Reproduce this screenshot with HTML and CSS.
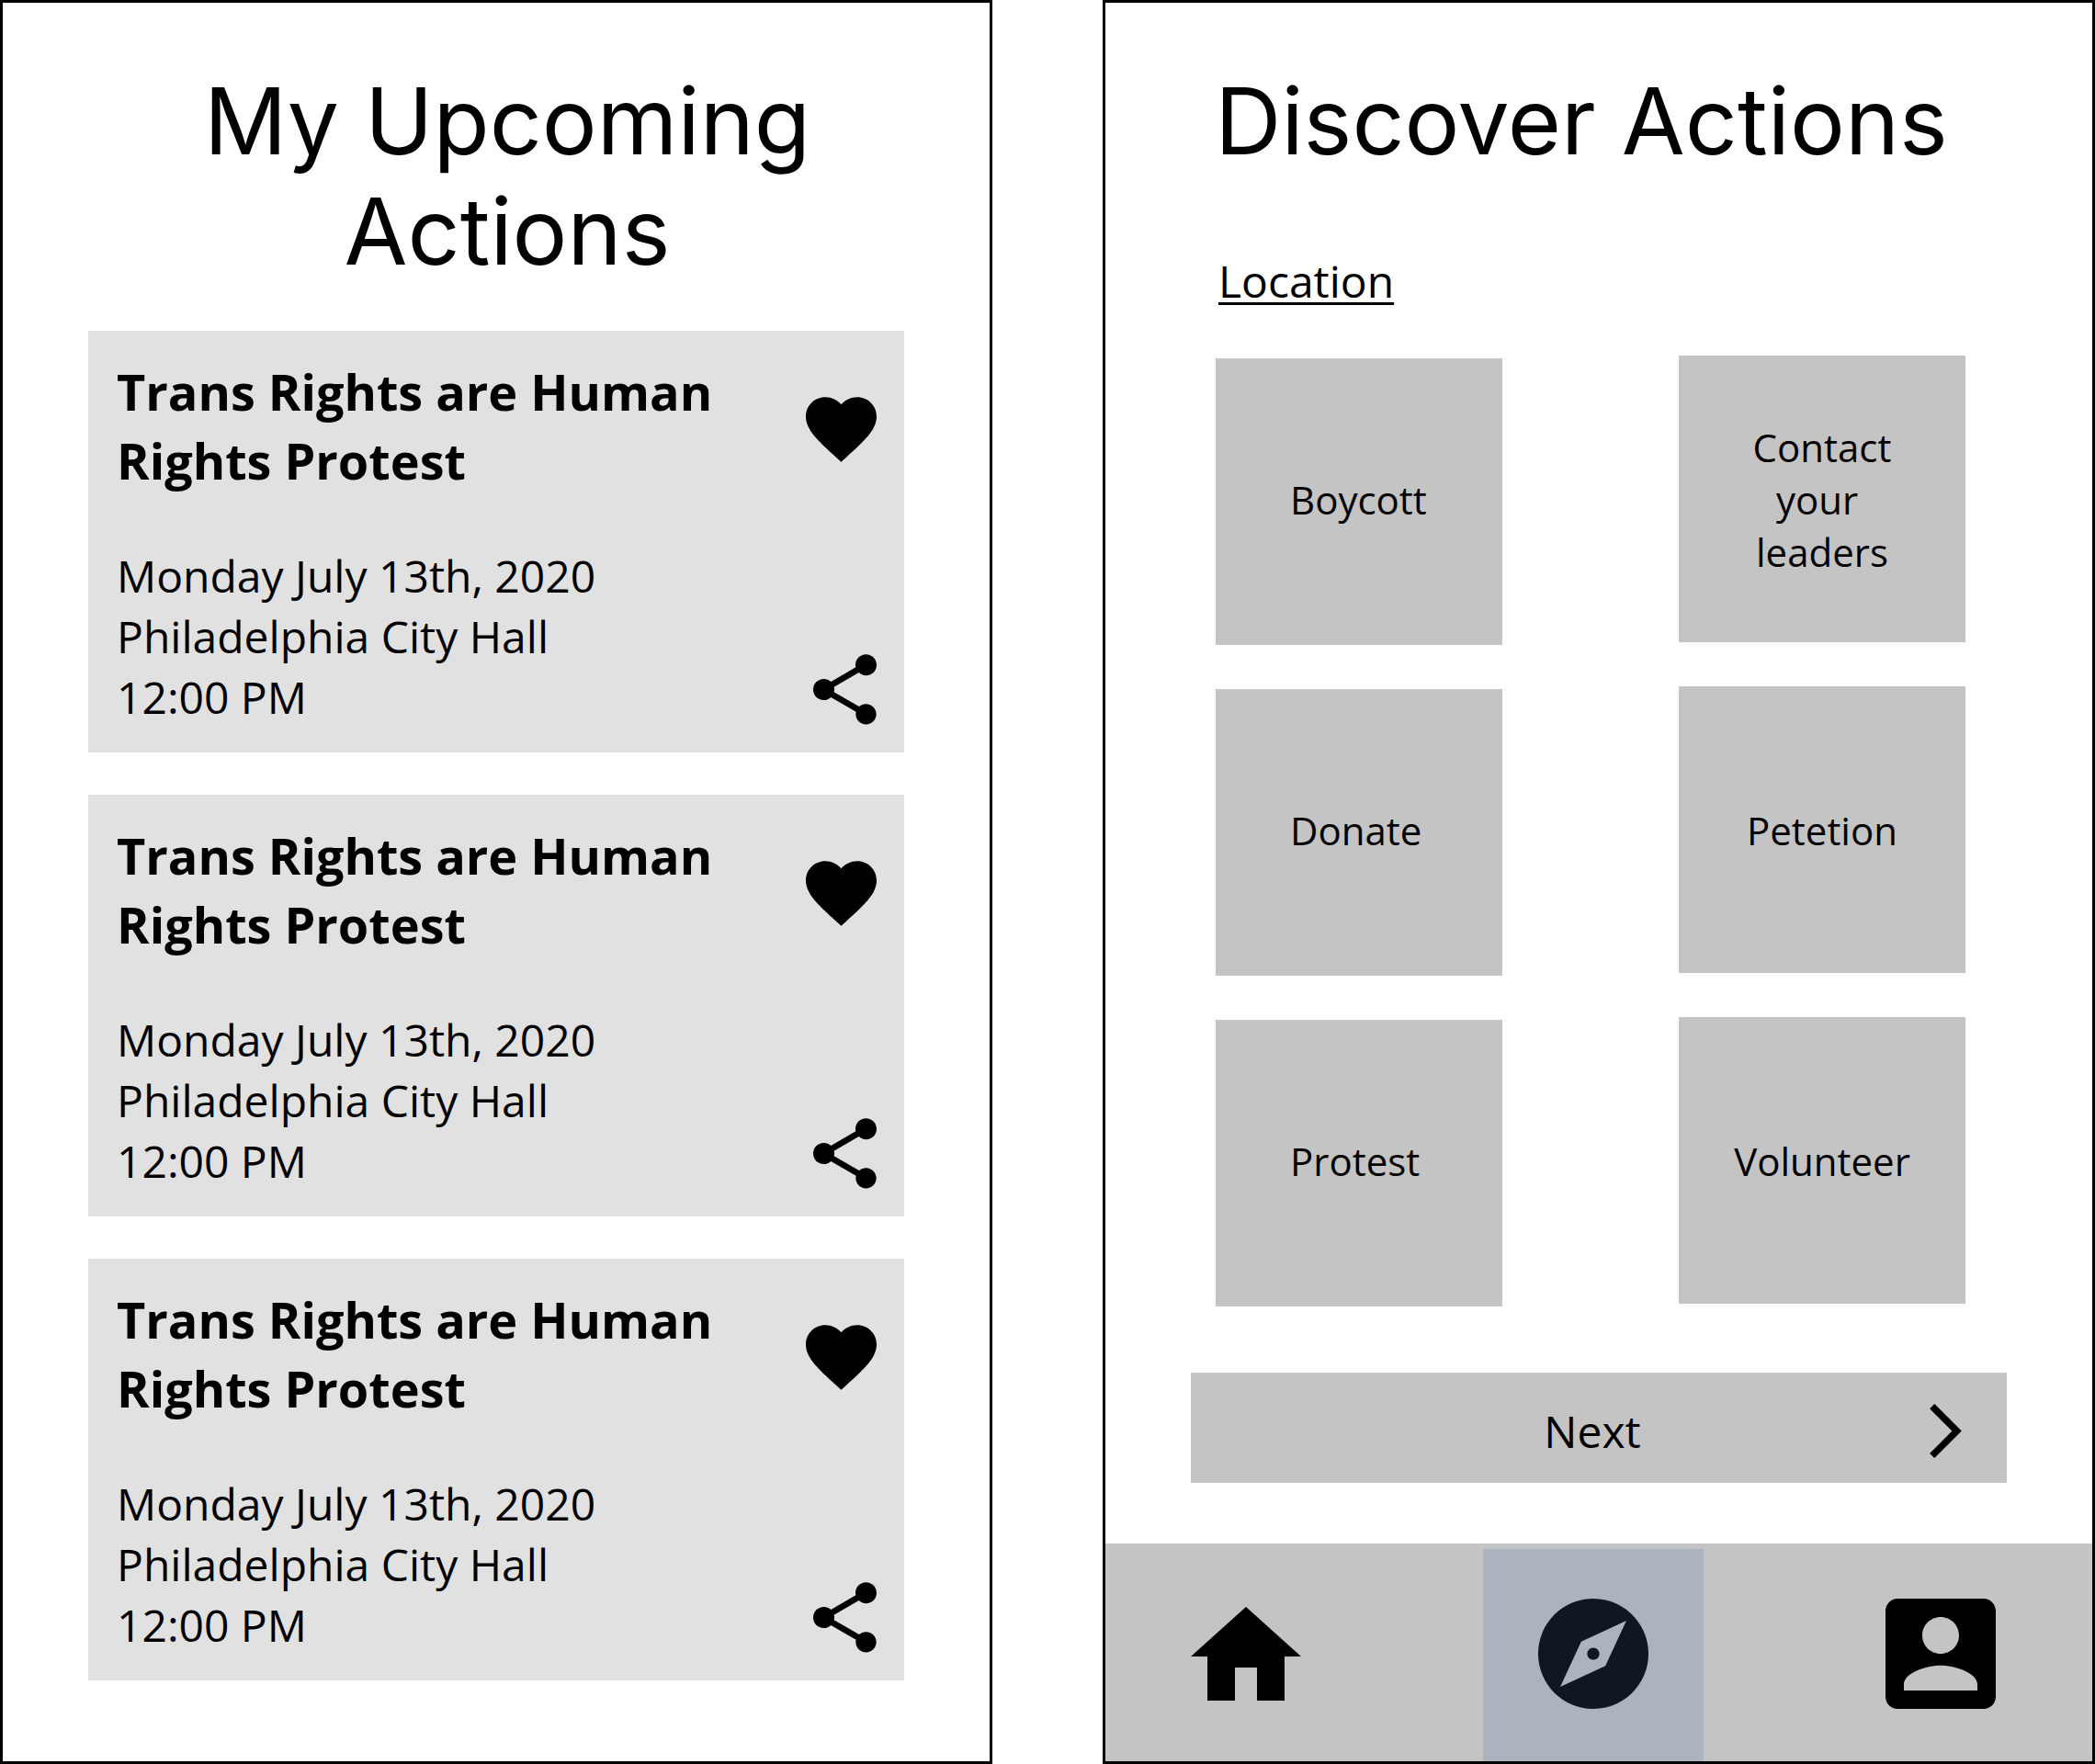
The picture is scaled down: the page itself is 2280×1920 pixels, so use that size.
FILE: index.html
```html
<!DOCTYPE html>
<html lang="en">
<head>
<meta charset="utf-8">
<meta name="viewport" content="width=device-width, initial-scale=1">
<title>Actions</title>
<link rel="stylesheet" href="styles.css">
</head>
<body>
<svg class="sprite" aria-hidden="true">
  <symbol id="heart" viewBox="2 3 20 18.35"><path d="M12 21.35l-1.45-1.32C5.4 15.36 2 12.28 2 8.5 2 5.42 4.42 3 7.5 3c1.74 0 3.41.81 4.5 2.09C13.09 3.81 14.76 3 16.5 3 19.58 3 22 5.42 22 8.5c0 3.78-3.4 6.86-8.55 11.54L12 21.35z"/></symbol>
  <symbol id="share" viewBox="3 2 18 20"><path d="M18 16.08c-.76 0-1.44.3-1.96.77L8.91 12.7c.05-.23.09-.46.09-.7s-.04-.47-.09-.7l7.05-4.11c.54.5 1.25.81 2.04.81 1.66 0 3-1.34 3-3s-1.34-3-3-3-3 1.34-3 3c0 .24.04.47.09.7L8.04 9.81C7.5 9.31 6.79 9 6 9c-1.66 0-3 1.34-3 3s1.34 3 3 3c.79 0 1.5-.31 2.04-.81l7.12 4.16c-.05.21-.08.43-.08.65 0 1.61 1.31 2.92 2.92 2.92s2.92-1.31 2.92-2.92-1.31-2.92-2.92-2.92z"/></symbol>
</svg>
<div class="screens">
  <main class="screen upcoming">
    <h1 class="heading">My Upcoming Actions</h1>
    <div class="cards">
      <article class="card">
        <div class="card-text">
          <h2 class="card-title">Trans Rights are Human Rights Protest</h2>
          <p class="card-info">Monday July 13th, 2020<br>Philadelphia City Hall<br>12:00 PM</p>
        </div>
        <div class="card-tools">
          <button class="icon-button" type="button" aria-label="Like"><svg class="heart"><use href="#heart"/></svg></button>
          <button class="icon-button" type="button" aria-label="Share"><svg class="share"><use href="#share"/></svg></button>
        </div>
      </article>
      <article class="card">
        <div class="card-text">
          <h2 class="card-title">Trans Rights are Human Rights Protest</h2>
          <p class="card-info">Monday July 13th, 2020<br>Philadelphia City Hall<br>12:00 PM</p>
        </div>
        <div class="card-tools">
          <button class="icon-button" type="button" aria-label="Like"><svg class="heart"><use href="#heart"/></svg></button>
          <button class="icon-button" type="button" aria-label="Share"><svg class="share"><use href="#share"/></svg></button>
        </div>
      </article>
      <article class="card">
        <div class="card-text">
          <h2 class="card-title">Trans Rights are Human Rights Protest</h2>
          <p class="card-info">Monday July 13th, 2020<br>Philadelphia City Hall<br>12:00 PM</p>
        </div>
        <div class="card-tools">
          <button class="icon-button" type="button" aria-label="Like"><svg class="heart"><use href="#heart"/></svg></button>
          <button class="icon-button" type="button" aria-label="Share"><svg class="share"><use href="#share"/></svg></button>
        </div>
      </article>
    </div>
  </main>
  <section class="screen discover">
    <h1 class="heading">Discover Actions</h1>
    <a class="location" href="#">Location</a>
    <div class="tiles">
      <div class="tile-column tile-column-start">
        <button class="tile" type="button">Boycott</button>
        <button class="tile" type="button">Donate</button>
        <button class="tile" type="button">Protest</button>
      </div>
      <div class="tile-column">
        <button class="tile" type="button">Contact<br>your&nbsp;<br>leaders</button>
        <button class="tile" type="button">Petetion</button>
        <button class="tile" type="button">Volunteer</button>
      </div>
    </div>
    <button class="next" type="button">
      <span class="next-label">Next</span>
      <svg class="chevron" viewBox="0 0 36 60"><path d="M2.7 2.7L29.6 29.6L2.7 56.5" fill="none" stroke="#000" stroke-width="7.4"/></svg>
    </button>
    <nav class="nav">
      <a class="nav-item" href="#" aria-label="Home"><svg class="home" viewBox="2 3 20 17"><path d="M10 20v-6h4v6h5v-8h3L12 3 2 12h3v8z"/></svg></a>
      <a class="nav-item nav-active" href="#" aria-label="Discover" aria-current="page"><svg class="nav-icon" viewBox="2 2 20 20"><path d="M12 10.9c-.61 0-1.1.49-1.1 1.1s.49 1.1 1.1 1.1c.61 0 1.1-.49 1.1-1.1s-.49-1.1-1.1-1.1zM12 2C6.48 2 2 6.48 2 12s4.48 10 10 10 10-4.48 10-10S17.52 2 12 2zm2.19 12.19L6 18l3.81-8.19L18 6l-3.81 8.19z"/></svg></a>
      <a class="nav-item" href="#" aria-label="Profile"><svg class="nav-icon" viewBox="3 3 18 18"><path d="M3 5v14c0 1.1.89 2 2 2h14c1.1 0 2-.9 2-2V5c0-1.1-.9-2-2-2H5c-1.11 0-2 .9-2 2zm12 4c0 1.66-1.34 3-3 3s-3-1.34-3-3 1.34-3 3-3 3 1.34 3 3zm-9 8c0-2 4-3.1 6-3.1s6 1.1 6 3.1v1H6v-1z"/></svg></a>
    </nav>
  </section>
</div>
</body>
</html>
```

FILE: styles.css
```css
* {
  box-sizing: border-box;
}

body {
  margin: 0;
  background: #fff;
  color: #000;
  font-family: "Open Sans", "Noto Sans", sans-serif;
  font-size: 48px;
  line-height: 66px;
}

h1,
h2,
p {
  margin: 0;
}

button {
  padding: 0;
  border: 0;
  color: inherit;
  font: inherit;
  cursor: pointer;
}

svg {
  display: block;
  fill: currentColor;
}

.sprite {
  position: absolute;
  width: 0;
  height: 0;
}

.screens {
  display: grid;
  grid-template-columns: 1fr 1fr;
  gap: 120px;
  min-height: 100vh;
}

.screen {
  display: flex;
  flex-direction: column;
  padding-top: 69px;
  border: 3px solid #000;
}

.heading {
  font-family: Inter, "Liberation Sans", sans-serif;
  font-size: 100px;
  font-weight: 400;
  line-height: 120px;
  text-align: center;
}

/* Upcoming actions */

.upcoming .heading {
  padding: 0 176px 0 200px;
}

.cards {
  display: grid;
  gap: 46px;
  padding: 48px 93px 84px;
}

.card {
  display: flex;
  justify-content: space-between;
  background: #e1e1e1;
}

.card-text {
  padding: 29px 0 27px 31px;
}

.card-title {
  max-width: 700px;
  margin-bottom: 55px;
  font-size: 54px;
  font-weight: 700;
  line-height: 75px;
}

.card-tools {
  display: flex;
  flex-direction: column;
  align-items: flex-end;
  justify-content: space-between;
  padding: 72px 30px 30px 0;
}

.icon-button {
  background: none;
}

.heart {
  width: 77px;
  height: 71px;
}

.share {
  width: 69px;
  height: 77px;
}

/* Discover actions */

.discover .heading {
  padding-right: 38px;
}

.location {
  align-self: flex-start;
  margin: 81px 0 48px 123px;
  color: inherit;
  text-decoration-thickness: 3px;
  text-underline-offset: 5px;
}

.tiles {
  display: flex;
  justify-content: space-between;
  padding: 0 138px 0 120px;
}

.tile-column {
  display: flex;
  flex-direction: column;
  gap: 48px;
}

.tile-column-start {
  padding-top: 3px;
}

.tile {
  width: 312px;
  height: 312px;
  background: #c4c4c4;
  font-size: 42px;
  line-height: 57px;
}

.tile-column-start .tile {
  padding: 0 0 6px 81px;
  text-align: left;
}

.next {
  display: flex;
  align-items: center;
  height: 120px;
  margin: 72px 93px 66px;
  padding: 8px 48px 0 70px;
  background: #c4c4c4;
}

.next-label {
  flex: 1;
}

.chevron {
  width: 36px;
  height: 60px;
}

.nav {
  display: flex;
  justify-content: space-between;
  margin-top: auto;
  padding: 6px 105px 0 93px;
  background: #c4c4c4;
}

.nav-item {
  display: flex;
  align-items: center;
  height: 231px;
  padding-bottom: 3px;
  color: #000;
}

.nav-active {
  padding: 0 60px 3px;
  background: #acb3bd;
  color: #0f1720;
}

.nav-icon {
  width: 120px;
  height: 120px;
}

.home {
  width: 120px;
  height: 102px;
}
```
